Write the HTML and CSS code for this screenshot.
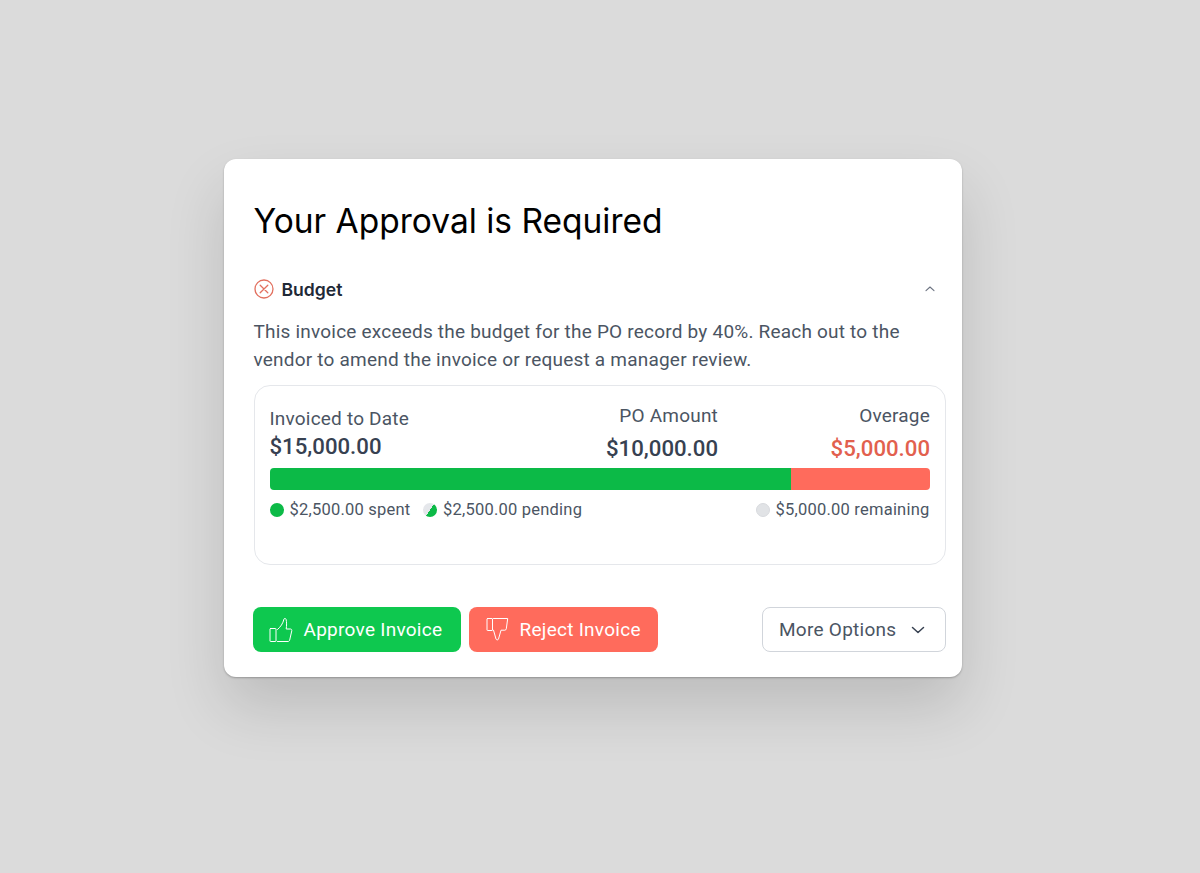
FILE: index.html
```html
<!DOCTYPE html>
<html lang="en">
<head>
    <meta charset="UTF-8">
    <title>Your Approval is Required</title>
    <link rel="stylesheet" href="styles.css">
</head>
<body>
    <div class="card">
        <h1 class="title">Your Approval is Required</h1>

        <div class="section-head">
            <svg class="status-icon" width="20" height="20" viewBox="0 0 20 20" fill="none" stroke="#e2705f" stroke-width="1.3" stroke-linecap="round">
                <circle cx="10" cy="10" r="9"/>
                <path d="M6.2 6.2l7.6 7.6M13.8 6.2l-7.6 7.6"/>
            </svg>
            <span class="section-name">Budget</span>
            <svg class="collapse-icon" width="12" height="8" viewBox="0 0 12 8" fill="none" stroke="#6b7280" stroke-width="1.1" stroke-linecap="round" stroke-linejoin="round">
                <path d="M2 5.6l4-3.6 4 3.6"/>
            </svg>
        </div>
        <p class="message">This invoice exceeds the budget for the PO record by 40%. Reach out to the vendor to amend the invoice or request a manager review.</p>

        <div class="budget-box">
            <div class="stats">
                <div class="stat stat-invoiced">
                    <div class="stat-label">Invoiced to Date</div>
                    <div class="stat-value">$15,000.00</div>
                </div>
                <div class="stat stat-po">
                    <div class="stat-label">PO Amount</div>
                    <div class="stat-value">$10,000.00</div>
                </div>
                <div class="stat stat-over">
                    <div class="stat-label">Overage</div>
                    <div class="stat-value over">$5,000.00</div>
                </div>
            </div>
            <div class="bar">
                <div class="bar-green"></div>
                <div class="bar-red"></div>
            </div>
            <div class="legend">
                <span class="legend-item"><span class="dot dot-spent"></span>$2,500.00 spent</span>
                <span class="legend-item pending"><span class="dot dot-pending"></span>$2,500.00 pending</span>
                <span class="legend-item remaining"><span class="dot dot-remaining"></span>$5,000.00 remaining</span>
            </div>
        </div>

        <div class="actions">
            <button class="btn btn-approve">
                <svg width="24" height="26" viewBox="0 0 24 26" fill="none" stroke="#ffffff" stroke-width="1" stroke-linejoin="round" stroke-linecap="round">
                    <rect x="1" y="11.500" width="6" height="13" rx="0.5"/>
                    <path d="M8.500 12.500c3-2.500 5.500-6 6.500-10.500.2-.8 1.800-.7 2.100.4.6 2.600.6 6.200.1 9.600h4.300c.9 0 1.500.8 1.300 1.700l-2.100 9.300c-.2.8-.8 1.500-1.700 1.500h-10.500"/>
                </svg>
                Approve Invoice
            </button>
            <button class="btn btn-reject">
                <svg width="24" height="26" viewBox="0 0 24 26" fill="none" stroke="#ffffff" stroke-width="1" stroke-linejoin="round" stroke-linecap="round">
                    <rect x="2" y="1.500" width="5.500" height="12" rx="0.5"/>
                    <path d="M8.500 1.500h14.200l-1.400 10.300c-.1.800-.7 1.400-1.500 1.400h-3.800l-2.500 8.800c-.3 1.200-2 1.200-2.500 0l-2.500-8.800"/>
                </svg>
                Reject Invoice
            </button>
            <button class="btn btn-more">
                More Options
                <svg width="16" height="10" viewBox="0 0 16 10" fill="none" stroke="#374151" stroke-width="1.5" stroke-linecap="round" stroke-linejoin="round">
                    <path d="M2.500 2.500L8 7.500l5.500-5"/>
                </svg>
            </button>
        </div>
    </div>
</body>
</html>
```

FILE: styles.css
```css
html, body {
    margin: 0;
    padding: 0;
    height: 873px;
    overflow: hidden;
}
body {
    background-color: #dbdbdb;
    font-family: Roboto, Arial, sans-serif;
    color: #4b5563;
}
.card {
    box-sizing: border-box;
    width: 738px;
    height: 518px;
    margin: 159px 0 0 224px;
    padding: 39px 16.5px 0 29.5px;
    background-color: #ffffff;
    border-radius: 12px;
    box-shadow: 0 1px 2px rgba(0, 0, 0, 0.25), 0 30px 60px rgba(0, 0, 0, 0.14);
}
.title {
    margin: 0;
    font-family: Inter, Arial, sans-serif;
    font-size: 33.5px;
    font-weight: 400;
    line-height: 46px;
    color: #000000;
}
.section-head {
    display: flex;
    align-items: center;
    margin-top: 33px;
    height: 24px;
    padding-right: 9.5px;
}
.status-icon {
    margin-right: 8px;
}
.section-name {
    font-family: Inter, Arial, sans-serif;
    font-size: 17.6px;
    font-weight: 600;
    color: #1f2937;
}
.collapse-icon {
    margin-left: auto;
}
.message {
    margin: 17px 0 0;
    font-size: 19px;
    line-height: 28px;
    letter-spacing: 0.21px;
    color: #4b5563;
    width: 670px;
}
.budget-box {
    box-sizing: border-box;
    height: 180px;
    margin-top: 11px;
    padding: 16px 14.5px 16px 15px;
    border: 1.5px solid #e5e7eb;
    border-radius: 16px;
}
.stats {
    display: flex;
    height: 66px;
}
.stat-invoiced {
    flex: 1;
}
.stat-po {
    text-align: right;
    padding-top: 1px;
}
.stat-over {
    width: 212px;
    text-align: right;
    padding-top: 1px;
}
.stat-label {
    font-size: 19px;
    line-height: 26px;
    letter-spacing: 0.2px;
    color: #4b5563;
}
.stat-invoiced .stat-label {
    padding-top: 4px;
    margin-bottom: -1px;
}
.stat-value {
    font-size: 22.2px;
    font-weight: 500;
    line-height: 30px;
    color: #374151;
}
.stat-po .stat-value,
.stat-over .stat-value {
    margin-top: 4px;
}
.stat-over .over {
    color: #e2604e;
}
.bar {
    display: flex;
    height: 22px;
    border-radius: 4px;
    overflow: hidden;
}
.bar-green {
    width: 521px;
    background-color: #0cba47;
}
.bar-red {
    flex: 1;
    background-color: #ff6b5c;
}
.legend {
    display: flex;
    margin-top: 9px;
    font-size: 16.5px;
    line-height: 22px;
    letter-spacing: 0.22px;
    color: #4b5563;
}
.legend-item {
    display: flex;
    align-items: center;
}
.pending {
    margin-left: 12.5px;
}
.remaining {
    margin-left: auto;
    margin-right: 0.5px;
}
.dot {
    width: 14px;
    height: 14px;
    border-radius: 50%;
    margin-right: 6px;
}
.dot-spent {
    background-color: #0cba47;
}
.dot-pending {
    background: linear-gradient(125deg, #e5e7eb 50%, #0cba47 50%);
}
.dot-remaining {
    background-color: #e1e3e6;
    border: 1px solid #d8dade;
    box-sizing: border-box;
}
.actions {
    display: flex;
    gap: 8px;
    margin: 42px -0.5px 0;
}
.btn {
    display: flex;
    align-items: center;
    box-sizing: border-box;
    height: 45px;
    padding: 0 16px;
    border: none;
    border-radius: 8px;
    font-family: Roboto, Arial, sans-serif;
    font-size: 19px;
    letter-spacing: 0.27px;
    color: #ffffff;
    cursor: pointer;
}
.btn svg {
    flex: none;
}
.btn-approve {
    background-color: #0ec84f;
    width: 208px;
    gap: 10.5px;
}
.btn-reject {
    background-color: #ff6b5c;
    width: 189px;
    gap: 10.5px;
}
.btn-more {
    margin-left: auto;
    width: 184px;
    background-color: #ffffff;
    border: 1.5px solid #d1d5db;
    color: #4b5563;
    gap: 14px;
}
```
